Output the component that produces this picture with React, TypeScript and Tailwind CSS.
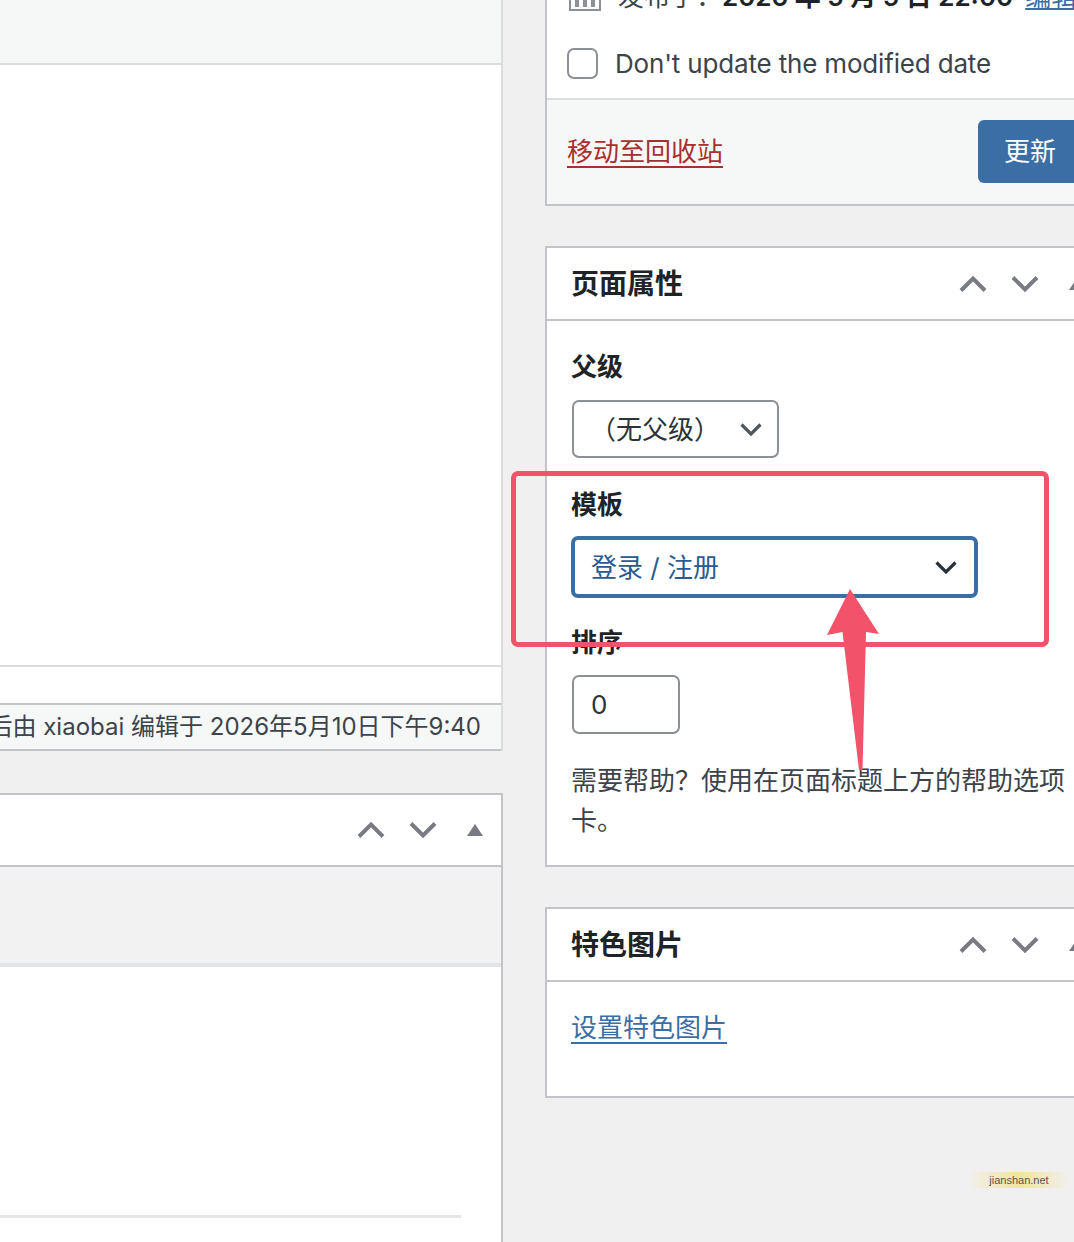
import React from "react";

function ChevUp() {
  return (
    <svg width="28" height="18" viewBox="0 0 28 18">
      <path d="M2 15.5 L14 3.5 L26 15.5" fill="none" stroke="#787c82" strokeWidth="4" />
    </svg>
  );
}

function ChevDown() {
  return (
    <svg width="28" height="18" viewBox="0 0 28 18">
      <path d="M2 2.5 L14 14.5 L26 2.5" fill="none" stroke="#787c82" strokeWidth="4" />
    </svg>
  );
}

function Tri() {
  return (
    <svg width="16" height="12" viewBox="0 0 16 12">
      <path d="M8 0 L16 12 L0 12 Z" fill="#787c82" />
    </svg>
  );
}

function HandleButtons() {
  return (
    <div className="ml-auto flex h-full items-center">
      <div className="flex h-full w-[52px] items-center justify-center">
        <ChevUp />
      </div>
      <div className="flex h-full w-[52px] items-center justify-center">
        <ChevDown />
      </div>
      <div className="flex h-full w-[52px] items-center justify-center">
        <Tri />
      </div>
    </div>
  );
}

function SelectChevron({ color }: { color: string }) {
  return (
    <svg width="22" height="13" viewBox="0 0 22 13">
      <path d="M1.5 1.5 L11 11 L20.5 1.5" fill="none" stroke={color} strokeWidth="3.2" />
    </svg>
  );
}

function CalendarIcon() {
  return (
    <svg width="32" height="32" viewBox="0 0 32 32">
      <rect x="1" y="3" width="30" height="27" fill="none" stroke="#8c8f94" strokeWidth="2" />
      <rect x="1" y="3" width="30" height="6" fill="#8c8f94" />
      <rect x="6" y="12" width="4" height="15" fill="#8c8f94" />
      <rect x="14" y="12" width="4" height="15" fill="#8c8f94" />
      <rect x="22" y="12" width="4" height="15" fill="#8c8f94" />
    </svg>
  );
}

export default function App() {
  return (
    <div className="relative flex h-[1242px] w-[1074px] items-start overflow-hidden bg-[#f0f0f1] text-[#3c434a] [font-family:Inter,'Noto_Sans_CJK_SC',sans-serif]">
      {/* LEFT COLUMN */}
      <div className="flex h-full w-[503px] shrink-0 flex-col">
        <div className="flex flex-col border-r-2 border-[#dcdcde] bg-white">
          <div className="h-[65px] border-b-2 border-[#dcdcde] bg-[#f6f7f7]" />
          <div className="h-[602px] border-b-2 border-[#dcdcde] bg-white" />
          <div className="h-[36px] bg-white" />
          <div className="flex h-[48px] items-center justify-end overflow-hidden whitespace-nowrap border-y-2 border-[#c3c4c7] bg-[#f6f7f7] pr-[20px] text-[24px] text-[#3c434a]">
            最后由 xiaobai 编辑于 2026年5月10日下午9:40
          </div>
        </div>

        <div className="mt-[42px] flex flex-1 flex-col border-r-2 border-t-2 border-[#c3c4c7] bg-white">
          <div className="flex h-[72px] items-center border-b-2 border-[#c3c4c7] bg-white">
            <HandleButtons />
          </div>
          <div className="h-[96px] bg-[#f2f2f2]" />
          <div className="h-[4px] bg-[#e2e4e7]" />
          <div className="flex-1 bg-white">
            <div className="mt-[248px] h-[3px] w-[461px] bg-[#e6e6e6]" />
          </div>
        </div>
      </div>

      {/* RIGHT COLUMN */}
      <div className="ml-[42px] mt-[-24px] flex w-[560px] shrink-0 flex-col">
        {/* Publish box */}
        <div className="border-2 border-t-0 border-[#c3c4c7] bg-white">
          <div className="pb-[15px]">
            <div className="flex h-[40px] items-center whitespace-nowrap pl-[22px] text-[26px]">
              <CalendarIcon />
              <span className="ml-[17px] text-[#3c434a]">发布于：</span>
              <b className="font-semibold text-[#1d2327]">2026 年 5 月 5 日 22:00</b>
              <span className="ml-[12px] text-[#3a6ea5] underline">编辑</span>
            </div>
            <div className="mt-[27px] flex h-[40px] items-center gap-[17px] pl-[20px]">
              <div className="h-[31px] w-[31px] rounded-[7px] border-2 border-[#8c8f94] bg-white" />
              <span className="text-[26px] tracking-[-0.17px] text-[#3c434a]">Don't update the modified date</span>
            </div>
          </div>
          <div className="flex items-center justify-between border-t-2 border-[#dcdcde] bg-[#f6f7f7] pb-[21px] pl-[20px] pr-[21px] pt-[20px]">
            <span className="text-[26px] text-[#a8302f] underline decoration-2 underline-offset-[5px]">移动至回收站</span>
            <div className="flex h-[63px] w-[104px] items-center justify-center rounded-[6px] bg-[#3a6ea5] text-[26px] text-white">
              更新
            </div>
          </div>
        </div>

        {/* Page attributes */}
        <div className="mt-[40px] border-2 border-[#c3c4c7] bg-white">
          <div className="flex h-[73px] items-center border-b-2 border-[#c3c4c7]">
            <h2 className="pl-[24px] text-[28px] font-semibold text-[#1d2327]">页面属性</h2>
            <HandleButtons />
          </div>
          <div className="px-[24px] pb-[24px] pt-[26px]">
            <p className="text-[26px] font-semibold leading-[40px] text-[#1d2327]">父级</p>
            <div className="ml-[1px] mt-[13px] flex h-[58px] w-[207px] items-center justify-between rounded-[7px] border-2 border-[#8c8f94] pl-[16px] pr-[15px] text-[26px] text-[#2c3338]">
              <span>（无父级）</span>
              <SelectChevron color="#50575e" />
            </div>
            <p className="mt-[27px] text-[26px] font-semibold leading-[40px] text-[#1d2327]">模板</p>
            <div className="mt-[11px] flex h-[62px] w-[407px] items-center justify-between rounded-[7px] border-[4px] border-[#3a6ea5] pl-[16px] pr-[17px] text-[26px] text-[#2a5a8f]">
              <span>登录 / 注册</span>
              <SelectChevron color="#2c3338" />
            </div>
            <p className="mt-[25px] text-[26px] font-semibold leading-[40px] text-[#1d2327]">排序</p>
            <div className="ml-[1px] mt-[12px] flex h-[59px] w-[108px] items-center rounded-[7px] border-2 border-[#8c8f94] pl-[17px] text-[26px] text-[#2c3338]">
              0
            </div>
            <p className="mt-[27px] text-[26px] leading-[40px] text-[#3c434a]">
              需要帮助？使用在页面标题上方的帮助选项卡。
            </p>
          </div>
        </div>

        {/* Featured image */}
        <div className="mt-[40px] border-2 border-[#c3c4c7] bg-white">
          <div className="flex h-[73px] items-center border-b-2 border-[#c3c4c7]">
            <h2 className="pl-[24px] text-[28px] font-semibold text-[#1d2327]">特色图片</h2>
            <HandleButtons />
          </div>
          <div className="px-[24px] pb-[48px] pt-[26px]">
            <span className="text-[26px] leading-[40px] text-[#3a6ea5] underline decoration-2 underline-offset-[5px]">设置特色图片</span>
          </div>
        </div>
      </div>

      {/* Annotation overlay */}
      <div className="pointer-events-none absolute left-[511px] top-[471px] h-[176px] w-[538px] rounded-[7px] border-[5px] border-[#f2526a]" />
      <svg className="pointer-events-none absolute left-0 top-0" width="1074" height="1242" viewBox="0 0 1074 1242">
        <polygon
          points="850,589 879,634 866,632 862.5,770 859,770 842.5,632 827,635"
          fill="#f2526a"
          strokeLinejoin="round"
        />
      </svg>

      {/* Watermark */}
      <div className="absolute left-[968px] top-[1172px] flex h-[16px] w-[102px] items-center justify-center bg-linear-to-r from-transparent via-[#f3e49c] to-transparent text-[11px] text-[#555] [font-family:'Liberation_Sans',Arial,sans-serif]">
        jianshan.net
      </div>
    </div>
  );
}
